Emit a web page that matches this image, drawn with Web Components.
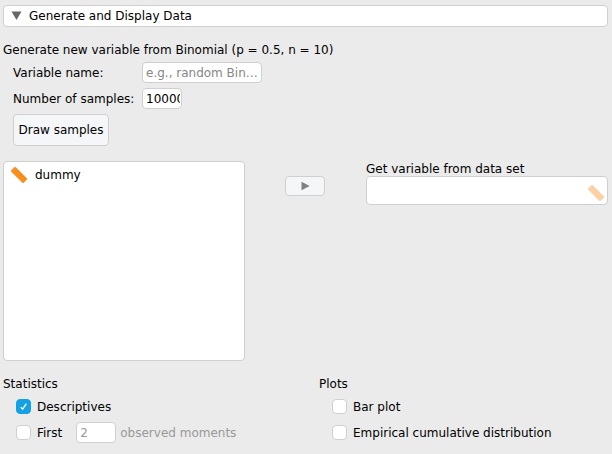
<!DOCTYPE html>
<html lang="en">
<head>
<meta charset="utf-8">
<title>Generate and Display Data</title>
<style>
html,body{margin:0;height:100%;overflow:hidden;background:#ebebeb}
body{font:12px/14px "DejaVu Sans",sans-serif;color:#000}
</style>
</head>
<body>
<data-form></data-form>
<script>
const define = (name, html) => customElements.define(name, class extends HTMLElement {
  constructor() {
    super();
    const t = document.createElement('template');
    t.innerHTML = '<style>*{box-sizing:border-box}:host{box-sizing:border-box}</style>' + html;
    this.attachShadow({mode: 'open'}).append(t.content.cloneNode(true));
  }
});

define('section-header', `
<style>
:host{display:flex;align-items:center;height:22px;background:#fff;border:1px solid #cfcfcf;border-radius:4px;padding-left:7px;gap:7px}
svg{width:11px;height:10px;display:block}
</style>
<svg viewBox="0 0 11 10"><path d="M.5 .5H10.5L5.5 9Z" fill="#666"/></svg><span><slot></slot></span>`);

define('text-field', `
<style>
:host{display:block;width:var(--w,40px);height:21px;background:#fff;border:1px solid #cfcfcf;border-radius:4px;padding:3px 1px 0 3px;flex:none}
div{overflow:hidden;white-space:nowrap;height:15px}
</style>
<div><slot></slot></div>`);

define('push-button', `
<style>
:host{display:flex;align-items:center;justify-content:center;background:#f5f6f8;border:1px solid #cfcfcf;border-radius:4px;white-space:nowrap}
</style>
<slot></slot>`);

define('check-option', `
<style>
:host{display:flex;align-items:center;height:21px;white-space:nowrap}
i{width:15px;height:15px;background:#fff;border:1px solid #cfcfcf;border-radius:4px;margin-right:6px;flex:none}
svg{display:none;width:13px;height:13px}
:host([checked]) i{background:#14a1e3;border-color:#14a1e3}
:host([checked]) svg{display:block}
</style>
<i><svg viewBox="0 0 13 13"><path d="M3.8 7.1L5.6 9.1L9.4 3.6" fill="none" stroke="#fff" stroke-width="1.3"/></svg></i><slot></slot>`);

define('scale-icon', `
<style>:host{display:block;width:16px;height:16px;flex:none}svg{display:block}</style>
<svg width="16" height="16" viewBox="0 0 16 16"><g transform="rotate(45 8 8)"><rect x="-.7" y="5" width="17.4" height="6" fill="#ff8f14" stroke="#d2a577" stroke-width=".8"/><path d="M2 5v2M4.5 5v2.6M7 5v2M9.5 5v2.6M12 5v2M14.3 5v2.6" stroke="#cf8130" stroke-width=".7"/></g></svg>`);

define('variable-list', `
<style>
:host{display:block;width:242px;height:200px;background:#fff;border:1px solid #cfcfcf;border-radius:4px;padding:5px 0 0 7px}
div{display:flex;align-items:center;height:16px;gap:8px}
</style>
<div><scale-icon></scale-icon><slot></slot></div>`);

define('assigned-variable', `
<style>
:host{display:block;width:242px;padding-top:1px}
div{display:flex;align-items:center;justify-content:flex-end;height:29px;background:#fff;border:1px solid #cfcfcf;border-radius:4px;padding:4px 3px 0 0}
scale-icon{opacity:.4}
</style>
<slot></slot><div><scale-icon></scale-icon></div>`);

define('option-group', `
<style>
:host{display:block}
section{padding:5px 0 0 13px;display:grid;row-gap:5px}
</style>
<slot name="title"></slot><section><slot></slot></section>`);

define('data-form', `
<style>
:host{display:block;padding:5px 4px 0 3px;width:612px;height:454px}
h2{font:inherit;margin:16px 0 5px}
.rows{padding-left:10px;display:grid;grid-template-columns:129px 120px;row-gap:5px;align-items:center}
.rows push-button{width:96px;height:32px}
.placeholder{color:#858585}
.assign{display:grid;grid-template-columns:242px 1fr 242px;margin-top:15px;align-items:start}
.assign push-button{width:40px;height:20px;margin:15px 0 0 40px}
.groups{display:grid;grid-template-columns:316px 1fr;margin-top:16px}
.off{color:#999}
check-option text-field{margin:0 4px 0 14px}
</style>
<section-header>Generate and Display Data</section-header>
<h2>Generate new variable from Binomial (p = 0.5, n = 10)</h2>
<div class="rows">
  <span>Variable name:</span><text-field class="placeholder" style="--w:120px">e.g., random Bin…</text-field>
  <span>Number of samples:</span><text-field>10000</text-field>
  <push-button>Draw samples</push-button>
</div>
<div class="assign">
  <variable-list>dummy</variable-list>
  <push-button><svg width="9" height="10" viewBox="0 0 9 10"><path d="M.5 .7V9.3L8.7 5Z" fill="#808080"/></svg></push-button>
  <assigned-variable>Get variable from data set</assigned-variable>
</div>
<div class="groups">
  <option-group><span slot="title">Statistics</span>
    <check-option checked>Descriptives</check-option>
    <check-option>First<text-field class="off">2</text-field><span class="off">observed moments</span></check-option>
  </option-group>
  <option-group><span slot="title">Plots</span>
    <check-option>Bar plot</check-option>
    <check-option>Empirical cumulative distribution</check-option>
  </option-group>
</div>`);
</script>
</body>
</html>
